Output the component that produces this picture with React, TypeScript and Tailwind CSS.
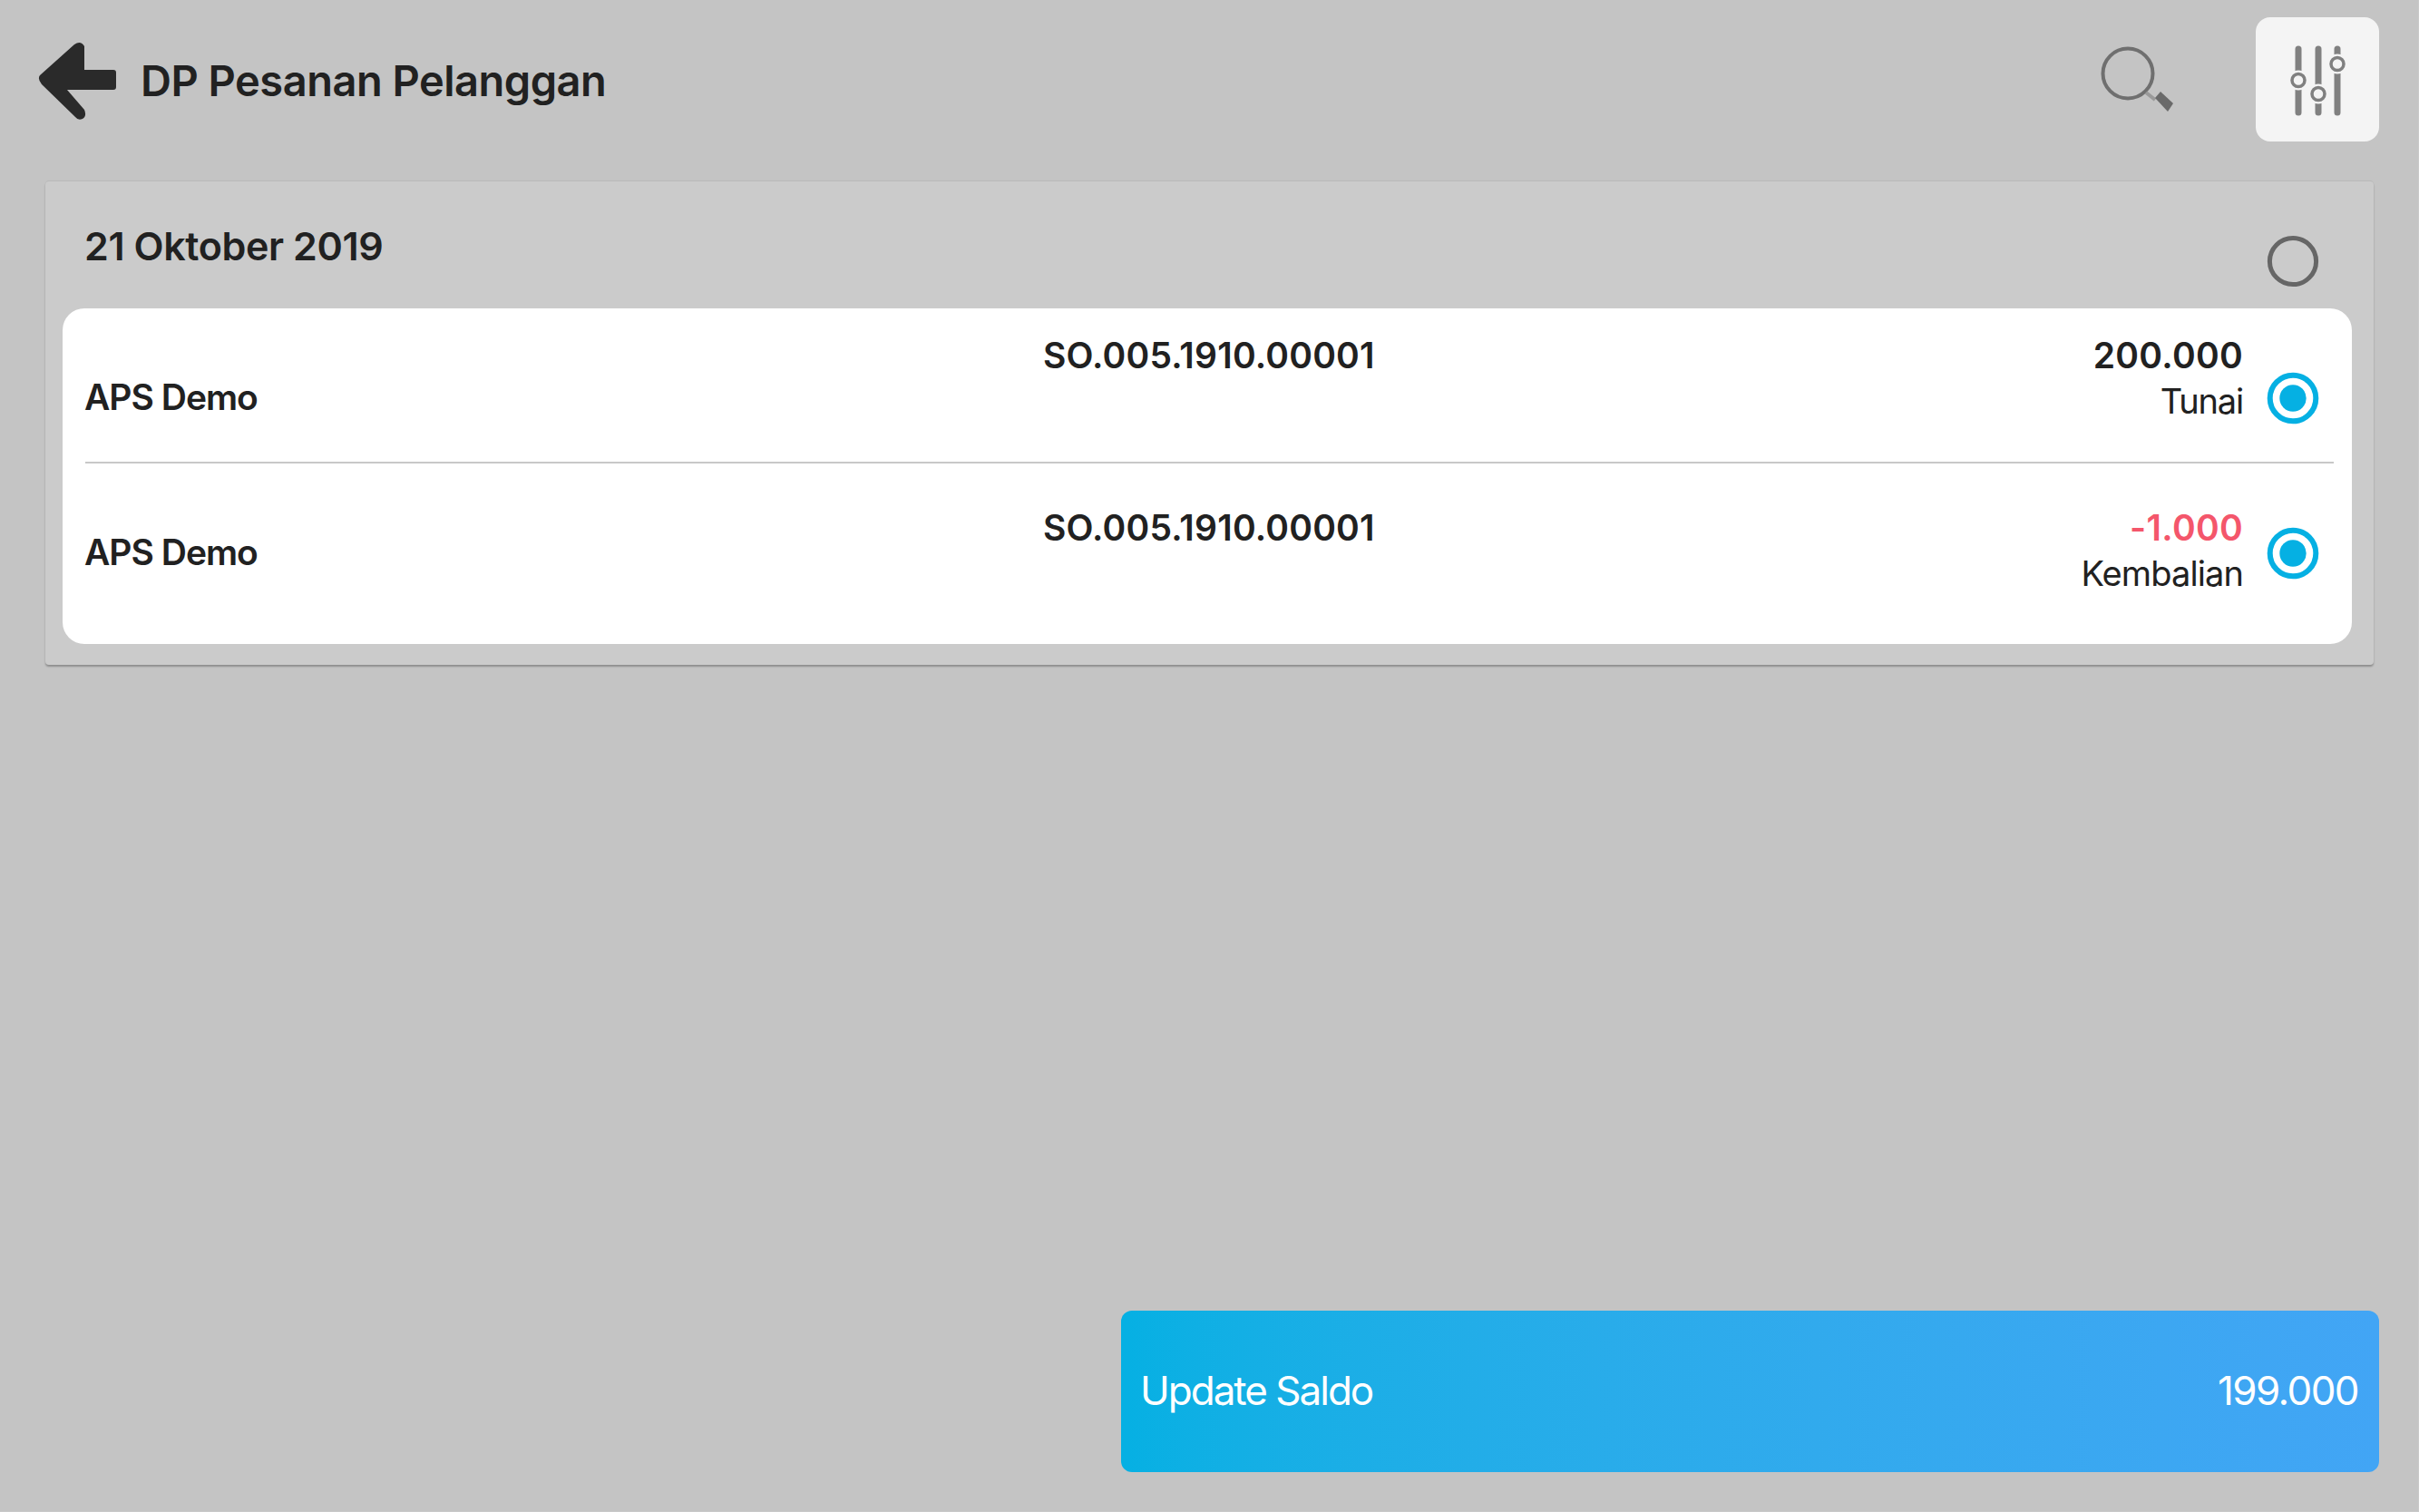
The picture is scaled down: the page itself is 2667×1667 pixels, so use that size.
const font = { fontFamily: '"Inter", "Liberation Sans", sans-serif' };

function Radio({ on }: { on: boolean }) {
  const c = on ? "#05b0e3" : "#666666";
  return (
    <svg width="58" height="58" viewBox="0 0 58 58" className="shrink-0">
      <circle cx="29" cy="29" r={on ? 25.3 : 25.6} fill="none" stroke={c} strokeWidth={on ? 6 : 5} />
      {on && <circle cx="29" cy="29" r="14.7" fill={c} />}
    </svg>
  );
}

function Row({ pad, amount, amountClass, label, labelClass, h }: { pad: string; amount: string; amountClass: string; label: string; labelClass: string; h: string }) {
  return (
    <div className={`flex items-start pl-[24px] pr-[36px] ${h}`}>
      <div className="w-[1057px] pt-[73px] text-[39px] leading-[50px] font-semibold tracking-[-1px] text-[#212121]">APS Demo</div>
      <div className={`flex-1 text-[39px] leading-[50px] font-semibold tracking-[0.2px] text-[#212121] ${pad}`}>SO.005.1910.00001</div>
      <div className={`text-right ${pad}`}>
        <div className={`text-[39px] leading-[50px] font-semibold tracking-[0.3px] ${amountClass}`}>{amount}</div>
        <div className={`text-[38px] leading-[50px] text-[#212121] ${labelClass}`}>{label}</div>
      </div>
      <div className="ml-[26px] mt-[70px]">
        <Radio on />
      </div>
    </div>
  );
}

export default function App() {
  return (
    <div style={font} className="w-[2667px] h-[1667px] bg-[#c9c9c9] overflow-hidden">
      <div className="w-[2666px] h-[1666px] bg-[#c4c4c4] flex flex-col">
        <header className="flex items-center h-[137px] mt-[19px] shrink-0">
          <svg width="90" height="90" viewBox="0 0 90 90" className="ml-[41px] mt-[5px] shrink-0">
            <path
              d="M3 38 L41 4 Q48 -1 52 6 L52 32 L84 32 Q87 32 87 35 L87 51 Q87 54 84 54 L33 54 L52 76 Q55 83 50 86 Q45 88 42 84 L5 48 Q0 42 3 38 Z"
              fill="#2a2a2a"
            />
          </svg>
          <h1 className="ml-[24px] mt-[3px] text-[47px] font-semibold tracking-[-0.5px] text-[#212121]">DP Pesanan Pelanggan</h1>
          <svg width="80" height="76" viewBox="0 0 80 76" className="ml-auto mr-[91px] mt-[1px] shrink-0">
            <circle cx="30" cy="31" r="27.5" fill="none" stroke="#6f6f6f" strokeWidth="4" />
            <path d="M50 52 L60 60" stroke="#9a9a9a" strokeWidth="4" />
            <path d="M60 58 L66 51 L80 64 L74 73 Z" fill="#6a6a6a" />
          </svg>
          <button className="mr-[43px] w-[136px] h-[137px] rounded-[16px] bg-[#f4f4f4] flex items-center justify-center shrink-0">
            <svg width="64" height="80" viewBox="0 0 64 80">
              <g stroke="#808080" strokeWidth="7" strokeLinecap="round">
                <path d="M11 6 L11 76" />
                <path d="M33 6 L33 76" />
                <path d="M54 6 L54 76" />
              </g>
              <g fill="#f4f4f4">
                <circle cx="11" cy="40.5" r="11" />
                <circle cx="33" cy="55.5" r="11" />
                <circle cx="54" cy="22.5" r="11" />
              </g>
              <g fill="#f4f4f4" stroke="#808080" strokeWidth="3.5">
                <circle cx="11" cy="40.5" r="7" />
                <circle cx="33" cy="55.5" r="7" />
                <circle cx="54" cy="22.5" r="7" />
              </g>
            </svg>
          </button>
        </header>

        <section className="ml-[50px] mt-[44px] w-[2567px] h-[533px] rounded-[4px] bg-[#cbcbcb] shadow-[0_2px_2px_rgba(0,0,0,0.28),0_-1px_1px_rgba(0,0,0,0.06)] pl-[19px] pr-[24px] shrink-0">
          <div className="flex items-start h-[140px] pl-[24px] pr-[36px]">
            <div className="flex-1 pt-[45px] text-[43px] leading-[52px] font-semibold tracking-[-0.4px] text-[#212121]">21 Oktober 2019</div>
            <div className="mt-[59px]">
              <Radio on={false} />
            </div>
          </div>
          <div className="bg-white rounded-[24px] h-[370px]">
            <Row h="h-[169px]" pad="pt-[27px]" amount="200.000" amountClass="text-[#212121]" label="Tunai" labelClass="tracking-[-1.2px]" />
            <div className="ml-[25px] mr-[20px] h-[2px] bg-[#c8c8c8]" />
            <Row h="h-[199px]" pad="pt-[46px]" amount="-1.000" amountClass="text-[#f4566b]" label="Kembalian" labelClass="tracking-[-0.9px]" />
          </div>
        </section>

        <div className="flex-1" />

        <button className="self-end mr-[43px] mb-[43px] w-[1387px] h-[178px] rounded-[12px] bg-gradient-to-r from-[#05b0e3] to-[#42a5f5] flex items-center justify-between pl-[21px] pr-[23px] text-white text-[44px] shrink-0">
          <span className="tracking-[-2px] mt-[-2px]">Update Saldo</span>
          <span className="tracking-[-1.6px] mt-[-2px]">199.000</span>
        </button>
      </div>
    </div>
  );
}
